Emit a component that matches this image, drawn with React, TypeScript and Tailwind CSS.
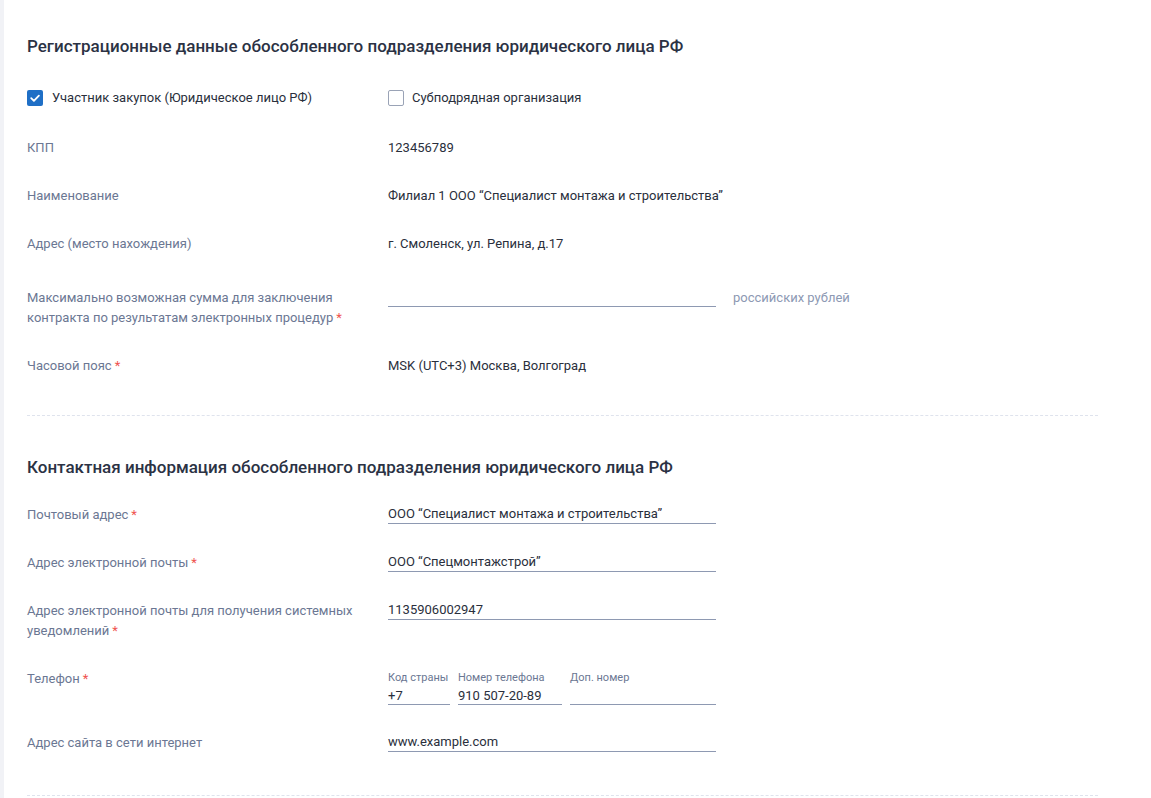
import React from "react";

const Req = () => <span className="text-[#ef5350] ml-[3px]">*</span>;

function Label({ children, req }: { children: React.ReactNode; req?: boolean }) {
  return (
    <div className="w-[361px] shrink-0 pr-[20px] text-[13px] leading-[20px] text-[#6b7793]">
      {children}
      {req && <Req />}
    </div>
  );
}

function Row({
  label,
  req,
  children,
  className = "py-[14px]",
}: {
  label: React.ReactNode;
  req?: boolean;
  children?: React.ReactNode;
  className?: string;
}) {
  return (
    <div className={`flex items-start ${className}`}>
      <Label req={req}>{label}</Label>
      <div className="flex-1">{children}</div>
    </div>
  );
}

function Value({ children }: { children: React.ReactNode }) {
  return <div className="text-[13px] leading-[20px] text-[#2a2f3c]">{children}</div>;
}

function Field({ value, width = "w-[328px]" }: { value?: string; width?: string }) {
  return (
    <div
      className={`${width} h-[19px] border-b border-[#8e99b2] text-[13px] leading-[18px] text-[#2a2f3c] whitespace-nowrap`}
    >
      {value}
    </div>
  );
}

function Checkbox({ checked }: { checked?: boolean }) {
  return checked ? (
    <span className="w-[16px] h-[16px] rounded-[2px] bg-[#1f6fc6] flex items-center justify-center shrink-0">
      <svg width="12" height="12" viewBox="0 0 12 12" fill="none">
        <path d="M2.2 6.2 L4.9 8.8 L9.9 3.6" stroke="#fff" strokeWidth="1.8" strokeLinecap="round" strokeLinejoin="round" />
      </svg>
    </span>
  ) : (
    <span className="w-[16px] h-[16px] rounded-[2px] border border-[#9aa3b6] bg-white shrink-0" />
  );
}

function PhoneSub({ label, value, width }: { label: string; value?: string; width: string }) {
  return (
    <div className={`${width} flex flex-col`}>
      <div className="text-[11px] leading-[17px] text-[#6b7793] whitespace-nowrap">{label}</div>
      <div className="h-[19px] border-b border-[#8e99b2] text-[13px] leading-[20px] text-[#2a2f3c] whitespace-nowrap">
        {value}
      </div>
    </div>
  );
}

export default function App() {
  return (
    <div
      className="flex min-h-[798px] bg-white"
      style={{ fontFamily: "Roboto, 'Noto Sans', Arial, sans-serif" }}
    >
      <div className="w-[4px] shrink-0 bg-[#f1f2f6]" />
      <div className="flex-1 pl-[23px] pr-[53px]">
        {/* Registration data */}
        <section>
          <h2 className="pt-[34px] text-[17px] leading-[24px] font-medium text-[#2b3244]">
            Регистрационные данные обособленного подразделения юридического лица РФ
          </h2>
          <div className="mt-[16px] flex items-center h-[48px]">
            <label className="w-[361px] shrink-0 flex items-center gap-[9px] text-[13px] text-[#2a2f3c]">
              <Checkbox checked />
              Участник закупок (Юридическое лицо РФ)
            </label>
            <label className="flex items-center gap-[8px] text-[13px] text-[#2a2f3c]">
              <Checkbox />
              Субподрядная организация
            </label>
          </div>
          <div className="pt-[2px]">
            <Row label="КПП">
              <Value>123456789</Value>
            </Row>
            <Row label="Наименование">
              <Value>Филиал 1 ООО “Специалист монтажа и строительства”</Value>
            </Row>
            <Row label="Адрес (место нахождения)">
              <Value>г. Смоленск, ул. Репина, д.17</Value>
            </Row>
            <Row
              className="pt-[20px] pb-[14px]"
              req
              label={
                <>
                  Максимально возможная сумма для заключения
                  <br />
                  контракта по результатам электронных процедур
                </>
              }
            >
              <div className="flex items-start">
                <Field />
                <span className="ml-[17px] text-[13px] leading-[20px] text-[#8d99b3]">российских рублей</span>
              </div>
            </Row>
            <Row label="Часовой пояс" req>
              <Value>MSK (UTC+3) Москва, Волгоград</Value>
            </Row>
          </div>
        </section>

        <div className="mt-[25px] border-t border-dashed border-[#dfe3ed]" />

        {/* Contact information */}
        <section>
          <h2 className="pt-[39px] text-[17px] leading-[24px] font-medium text-[#2b3244]">
            Контактная информация обособленного подразделения юридического лица РФ
          </h2>
          <div className="mt-[12px]">
            <Row label="Почтовый адрес" req>
              <Field value="ООО “Специалист монтажа и строительства”" />
            </Row>
            <Row label="Адрес электронной почты" req>
              <Field value="ООО “Спецмонтажстрой”" />
            </Row>
            <Row
              req
              label={
                <>
                  Адрес электронной почты для получения системных
                  <br />
                  уведомлений
                </>
              }
            >
              <Field value="1135906002947" />
            </Row>
            <Row label="Телефон" req className="pt-[14px] pb-[14px]">
              <div className="flex gap-[8px]">
                <PhoneSub label="Код страны" value="+7" width="w-[62px]" />
                <PhoneSub label="Номер телефона" value="910 507-20-89" width="w-[104px]" />
                <PhoneSub label="Доп. номер" width="w-[146px]" />
              </div>
            </Row>
            <Row label="Адрес сайта в сети интернет">
              <Field value="www.example.com" />
            </Row>
          </div>
        </section>

        <div className="mt-[28px] border-t border-dashed border-[#dfe3ed]" />
      </div>
    </div>
  );
}
